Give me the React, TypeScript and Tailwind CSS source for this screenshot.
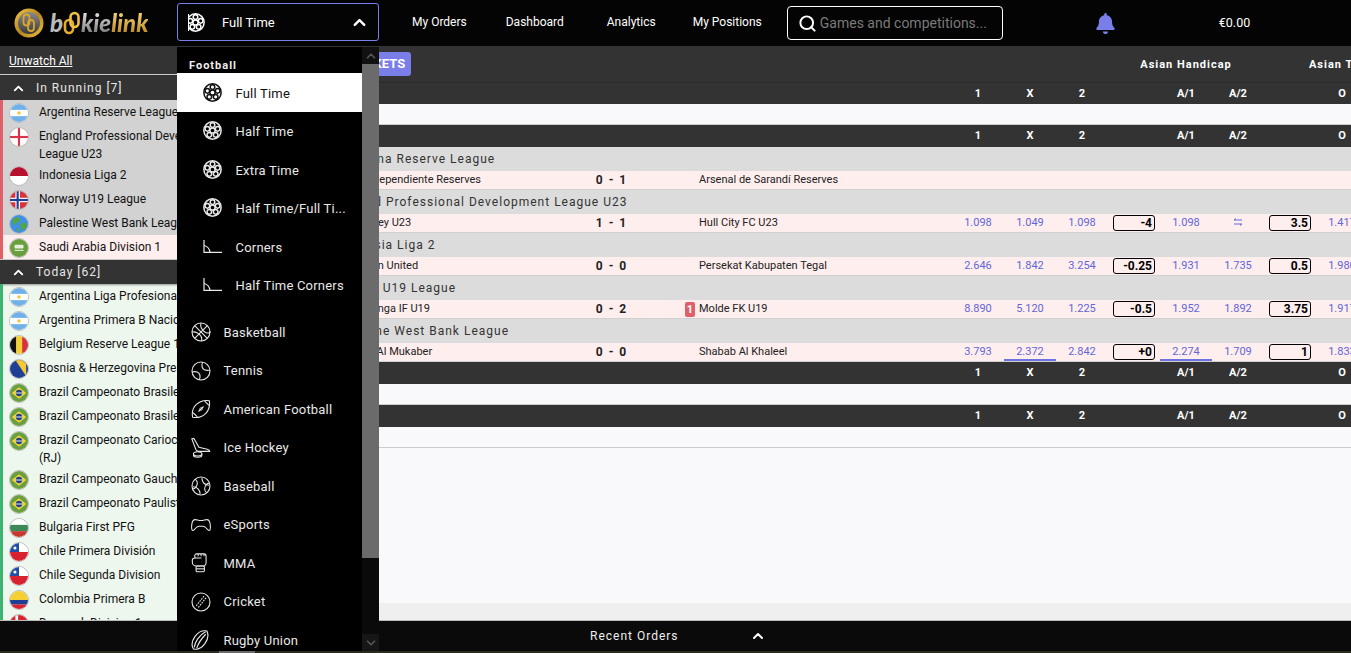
import React from "react";
import { ChevronDown, ChevronUp, Search } from "lucide-react";
import { FaBell } from "react-icons/fa";

const SoccerIcon = () => (
  <svg width="19" height="19" viewBox="0 0 24 24" fill="none" stroke="currentColor" strokeWidth="1.9">
    <circle cx="12" cy="12" r="10.9" />
    <circle cx="12" cy="12" r="3.3" />
    <circle cx="12" cy="5.2" r="2.9" />
    <circle cx="18.5" cy="9.9" r="2.9" />
    <circle cx="16" cy="17.5" r="2.9" />
    <circle cx="8" cy="17.5" r="2.9" />
    <circle cx="5.5" cy="9.9" r="2.9" />
  </svg>
);

const CornerIcon = () => (
  <svg width="19" height="13" viewBox="0 0 19 13" fill="none" stroke="currentColor" strokeWidth="1.2">
    <path d="M1 0v12.4h18" />
    <path d="M1 5.5c3 .6 5.5 3.2 6 6.9" />
  </svg>
);

const BasketballIcon = () => (
  <svg width="20" height="20" viewBox="0 0 24 24" fill="none" stroke="currentColor" strokeWidth="1.3">
    <circle cx="12" cy="12" r="10.8" />
    <path d="M4.4 4.4l15.2 15.2M19.6 4.4L4.4 19.6" />
    <path d="M12 1.2c-1.2 4 1 9 5 11s5.600 1 6 -1" />
    <path d="M1.200 12c3.800-.8 8.800 1.200 10.800 5.200 1 2 1 4.600.2 5.600" />
  </svg>
);

const TennisIcon = () => (
  <svg width="20" height="20" viewBox="0 0 24 24" fill="none" stroke="currentColor" strokeWidth="1.3">
    <circle cx="12" cy="12" r="10.8" />
    <path d="M14 1.400c-2.600 6.600 1.200 11.400 8.800 9.400" />
    <path d="M1.200 13.200c7.600-2 11.400 2.800 8.800 9.400" />
  </svg>
);

const AmericanFootballIcon = () => (
  <svg width="20" height="20" viewBox="0 0 24 24" fill="none" stroke="currentColor" strokeWidth="1.3">
    <path d="M2 22c-1.400-7 .6-12 4.500-15.500S16 1 22 2c1 6.500-.6 11.500-4.500 15.500S8.500 23 2 22z" />
    <path d="M2.600 16.500l5 5M16.500 2.600l5 5" />
    <path d="M9 15l6-6M10 11.500l2.500 2.500M11.500 10l2.500 2.500" />
  </svg>
);

const HockeyIcon = () => (
  <svg width="20" height="20" viewBox="0 0 24 24" fill="none" stroke="currentColor" strokeWidth="1.3">
    <path d="M1 1l2.500-.5 6 10.500 10 2.500c2 .5 3 1.500 3 2.500H9.500C7.500 16 6.500 15 6 14z" />
    <ellipse cx="8" cy="19" rx="5" ry="2.500" />
    <path d="M3 19v2c0 1 2 2 5 2s5-1 5-2v-2" />
  </svg>
);

const BaseballIcon = () => (
  <svg width="20" height="20" viewBox="0 0 24 24" fill="none" stroke="currentColor" strokeWidth="1.3">
    <circle cx="12" cy="12" r="10.800" />
    <path d="M5 3.800c3.500 2.800 3.500 7 0 10.500-1 1-2.500 1.700-3.800-.2" />
    <path d="M19 20.200c-3.500-2.800-3.500-7 0-10.500 1-1 2.500-1.700 3.800.2" />
    <path d="M13 2.500c.5 5.500 3 8 8.500 8.500M2.500 13c5.500.5 8 3 8.500 8.500" />
  </svg>
);

const EsportsIcon = () => (
  <svg width="20" height="14" viewBox="0 0 24 16" fill="none" stroke="currentColor" strokeWidth="1.300">
    <path d="M5 1.500c2 0 3.500 1 5 1h4c1.500 0 3-1 5-1 2.500 0 3.500 2 4 5.500.4 3 .6 7-1 7.500-1.800.5-3-2.500-5-4-1-.8-2-1-3-1h-4c-1 0-2 .2-3 1-2 1.500-3.200 4.500-5 4-1.600-.5-1.400-4.500-1-7.500C1.500 3.500 2.500 1.500 5 1.500z" />
  </svg>
);

const MmaIcon = () => (
  <svg width="16" height="20" viewBox="0 0 18 24" fill="none" stroke="currentColor" strokeWidth="1.300">
    <path d="M6 1h9c1.500 0 2.500 1 2.500 2.500V12c0 1.500-1 3-2.500 3.500H6C3 15.500 1 13.500 1 11V8.500C1 7 2 6 4 6V3c0-1 1-2 2-2z" />
    <path d="M4 6h8M8 1v3M11.500 1v3M15 1v3" />
    <rect x="5.500" y="15.500" width="10" height="7" rx="1.500" />
    <path d="M5.500 19h10" />
  </svg>
);

const CricketIcon = () => (
  <svg width="20" height="20" viewBox="0 0 24 24" fill="none" stroke="currentColor" strokeWidth="1.300">
    <circle cx="12" cy="12" r="10.800" />
    <path d="M15.500 5L6 17" strokeDasharray="2 1.200" />
    <path d="M18 7L8.500 19" strokeDasharray="2 1.200" />
  </svg>
);

const RugbyIcon = () => (
  <svg width="18" height="20" viewBox="0 0 22 24" fill="none" stroke="currentColor" strokeWidth="1.400">
    <path d="M3 23c-2.500-4-2-10 2-15.500C9 2 14.500 0 19.500 1c2 4.500 1.500 10-2.500 15.500S7.500 24 3 23z" />
    <path d="M4 21C5 14 10 6 18 2" />
    <path d="M7 22c2-6 6-12 11-17" />
  </svg>
);

const LogoMark = () => (
  <svg width="30" height="30" viewBox="0 0 30 30" className="shrink-0">
    <defs>
      <linearGradient id="coinRing" x1="0" y1="0" x2="1" y2="1">
        <stop offset="0" stopColor="#f5c84a" />
        <stop offset="0.5" stopColor="#b5851c" />
        <stop offset="1" stopColor="#f0c040" />
      </linearGradient>
      <linearGradient id="coinFace" x1="0" y1="0" x2="0" y2="1">
        <stop offset="0" stopColor="#8a8a8a" />
        <stop offset="1" stopColor="#3a3a3a" />
      </linearGradient>
    </defs>
    <circle cx="15" cy="15" r="14.500" fill="url(#coinRing)" />
    <circle cx="15" cy="15" r="11" fill="url(#coinFace)" />
    <rect x="9.500" y="6.500" width="6" height="11" rx="3" fill="none" stroke="#d9a52c" strokeWidth="1.800" />
    <rect x="14" y="12" width="6" height="11" rx="3" fill="none" stroke="#d9a52c" strokeWidth="1.800" />
  </svg>
);

const LogoLink = () => (
  <svg width="18" height="24" viewBox="0 0 18 24" className="shrink-0">
    <rect x="2" y="9" width="8" height="13" rx="4" fill="none" stroke="#e3ad2c" strokeWidth="2.600" />
    <rect x="7.500" y="2" width="8" height="14" rx="4" fill="none" stroke="#f0c040" strokeWidth="2.600" />
  </svg>
);

const Flag = ({ code }: { code: string }) => {
  const art: Record<string, React.ReactNode> = {
    ar: (
      <>
        <rect width="20" height="20" fill="#fff" />
        <rect width="20" height="6.500" fill="#6fb1e8" />
        <rect y="13.500" width="20" height="6.500" fill="#6fb1e8" />
        <circle cx="10" cy="10" r="2" fill="#f5c542" />
      </>
    ),
    en: (
      <>
        <rect width="20" height="20" fill="#fff" />
        <rect x="8.800" width="2.400" height="20" fill="#d8344a" />
        <rect y="8.800" width="20" height="2.400" fill="#d8344a" />
      </>
    ),
    id: (
      <>
        <rect width="20" height="20" fill="#fff" />
        <rect width="20" height="10" fill="#b8102f" />
      </>
    ),
    no: (
      <>
        <rect width="20" height="20" fill="#d9323f" />
        <rect x="6" width="5" height="20" fill="#fff" />
        <rect y="7.500" width="20" height="5" fill="#fff" />
        <rect x="7.300" width="2.400" height="20" fill="#1f3f94" />
        <rect y="8.800" width="20" height="2.400" fill="#1f3f94" />
      </>
    ),
    ps: (
      <>
        <rect width="20" height="20" fill="#3f8ee8" />
        <path d="M3 5l5-3 3 2-1 4-4 1-1 3-2-2zM11 10l5-2 3 3-3 5-3 1-1-4zM8 14l2 2-1 3-2-2z" fill="#53a83c" />
      </>
    ),
    sa: (
      <>
        <rect width="20" height="20" fill="#6a9f3f" />
        <rect x="5" y="6.500" width="10" height="4" rx="1" fill="#e6efdb" />
        <rect x="5" y="12" width="10" height="1.200" fill="#e6efdb" />
      </>
    ),
    be: (
      <>
        <rect width="7" height="20" fill="#111" />
        <rect x="7" width="6.500" height="20" fill="#f5d033" />
        <rect x="13.500" width="6.500" height="20" fill="#d9323f" />
      </>
    ),
    ba: (
      <>
        <rect width="20" height="20" fill="#1f3f94" />
        <path d="M6 0h12v18z" fill="#f5c935" />
      </>
    ),
    br: (
      <>
        <rect width="20" height="20" fill="#6a9f3f" />
        <path d="M10 3.500L18 10l-8 6.500L2 10z" fill="#f2d43a" />
        <circle cx="10" cy="10" r="3.500" fill="#1f3f94" />
        <rect x="6.700" y="9.500" width="6.600" height="1" fill="#fff" />
      </>
    ),
    bg: (
      <>
        <rect width="20" height="20" fill="#fff" />
        <rect y="6.500" width="20" height="7" fill="#3d8a58" />
        <rect y="13.500" width="20" height="6.500" fill="#c7382f" />
      </>
    ),
    cl: (
      <>
        <rect width="20" height="20" fill="#fff" />
        <rect y="10" width="20" height="10" fill="#d9222f" />
        <rect width="10" height="10" fill="#1f4fa8" />
        <circle cx="5.500" cy="5.500" r="1.700" fill="#fff" />
      </>
    ),
    co: (
      <>
        <rect width="20" height="10" fill="#f5d033" />
        <rect y="10" width="20" height="5" fill="#1f3f94" />
        <rect y="15" width="20" height="5" fill="#d9222f" />
      </>
    ),
    dk: (
      <>
        <rect width="20" height="20" fill="#d9222f" />
        <rect x="6" width="3" height="20" fill="#fff" />
        <rect y="8.500" width="20" height="3" fill="#fff" />
      </>
    ),
  };
  return (
    <svg width="20" height="20" viewBox="0 0 20 20" className="shrink-0 rounded-full border border-[#bdbdbd]">
      {art[code]}
    </svg>
  );
};

const inRunning = [
  { code: "ar", name: "Argentina Reserve League", live: false },
  { code: "en", name: "England Professional Development League U23", live: false },
  { code: "id", name: "Indonesia Liga 2", live: false },
  { code: "no", name: "Norway U19 League", live: false },
  { code: "ps", name: "Palestine West Bank League", live: false },
  { code: "sa", name: "Saudi Arabia Division 1", live: true },
];

const today = [
  { code: "ar", name: "Argentina Liga Profesional" },
  { code: "ar", name: "Argentina Primera B Nacional" },
  { code: "be", name: "Belgium Reserve League 1" },
  { code: "ba", name: "Bosnia & Herzegovina Premier" },
  { code: "br", name: "Brazil Campeonato Brasileiro" },
  { code: "br", name: "Brazil Campeonato Brasileiro B" },
  { code: "br", name: "Brazil Campeonato Carioca Serie A (RJ)" },
  { code: "br", name: "Brazil Campeonato Gaucho" },
  { code: "br", name: "Brazil Campeonato Paulista" },
  { code: "bg", name: "Bulgaria First PFG" },
  { code: "cl", name: "Chile Primera División" },
  { code: "cl", name: "Chile Segunda Division" },
  { code: "co", name: "Colombia Primera B" },
  { code: "dk", name: "Denmark Division 1" },
];

const footballItems = [
  { label: "Full Time", icon: <SoccerIcon />, active: true },
  { label: "Half Time", icon: <SoccerIcon /> },
  { label: "Extra Time", icon: <SoccerIcon /> },
  { label: "Half Time/Full Ti...", icon: <SoccerIcon /> },
  { label: "Corners", icon: <CornerIcon /> },
  { label: "Half Time Corners", icon: <CornerIcon /> },
];

const sports = [
  { label: "Basketball", icon: <BasketballIcon /> },
  { label: "Tennis", icon: <TennisIcon /> },
  { label: "American Football", icon: <AmericanFootballIcon /> },
  { label: "Ice Hockey", icon: <HockeyIcon /> },
  { label: "Baseball", icon: <BaseballIcon /> },
  { label: "eSports", icon: <EsportsIcon /> },
  { label: "MMA", icon: <MmaIcon /> },
  { label: "Cricket", icon: <CricketIcon /> },
  { label: "Rugby Union", icon: <RugbyIcon /> },
];

const matches = [
  {
    league: "Argentina Reserve League",
    home: "CA Independiente Reserves",
    score: "0 - 1",
    away: "Arsenal de Sarandí Reserves",
  },
  {
    league: "England Professional Development League U23",
    home: "Barnsley U23",
    score: "1 - 1",
    away: "Hull City FC U23",
    odds: ["1.098", "1.049", "1.098", "-4", "1.098", "swap", "3.5", "1.417"],
  },
  {
    league: "Indonesia Liga 2",
    home: "Cilegon United",
    score: "0 - 0",
    away: "Persekat Kabupaten Tegal",
    odds: ["2.646", "1.842", "3.254", "-0.25", "1.931", "1.735", "0.5", "1.980"],
  },
  {
    league: "Norway U19 League",
    home: "Vålerenga IF U19",
    score: "0 - 2",
    away: "Molde FK U19",
    card: "1",
    odds: ["8.890", "5.120", "1.225", "-0.5", "1.952", "1.892", "3.75", "1.917"],
  },
  {
    league: "Palestine West Bank League",
    home: "Jabal Al Mukaber",
    score: "0 - 0",
    away: "Shabab Al Khaleel",
    odds: ["3.793", "2.372", "2.842", "+0", "2.274", "1.709", "1", "1.833"],
    marked: [1, 4],
  },
];

const SectionHeader = ({ title }: { title: string }) => (
  <div className="flex h-[24px] shrink-0 items-center bg-[#333] pl-[11px] text-[12px] tracking-[1px] text-[#e8e8e8] shadow-[0_1px_2px_rgba(0,0,0,0.4)]">
    <ChevronUp size={15} strokeWidth={3} className="mr-[10px] text-white" />
    {title}
  </div>
);

const ColumnHeader = ({ first }: { first?: boolean }) => (
  <div
    className={
      first
        ? "flex h-[21px] shrink-0 items-center bg-[#333] pt-[2px] text-[11px] font-bold text-white"
        : "flex h-[22px] shrink-0 items-center bg-[#333] text-[11px] font-bold text-white"
    }
  >
    <div className="w-[712px] shrink-0" />
    <div className="w-[52px] shrink-0 text-center">1</div>
    <div className="w-[52px] shrink-0 text-center">X</div>
    <div className="w-[52px] shrink-0 text-center">2</div>
    <div className="w-[52px] shrink-0" />
    <div className="w-[52px] shrink-0 text-center">A/1</div>
    <div className="w-[52px] shrink-0 text-center">A/2</div>
    <div className="w-[52px] shrink-0" />
    <div className="w-[52px] shrink-0 text-center">O</div>
  </div>
);

const EmptyRow = () => <div className="h-[21px] shrink-0 border-b border-[#ccc] bg-[#f9f9fb]" />;

const OddsCell = ({ value, marked }: { value: string; marked: boolean }) => (
  <div
    className={
      marked
        ? "flex h-[18px] w-[52px] shrink-0 items-center justify-center border-b-2 border-[#6c70e0] text-[#6266d8]"
        : "flex h-[18px] w-[52px] shrink-0 items-center justify-center pb-[2px] text-[#6266d8]"
    }
  >
    {value === "swap" ? (
      <svg width="10" height="8" viewBox="0 0 10 8" fill="none" stroke="currentColor" strokeWidth="1">
        <path d="M9 2H1l2-1.500M1 6h8L7 7.500" />
      </svg>
    ) : (
      value
    )}
  </div>
);

const LineBox = ({ value }: { value: string }) => (
  <div className="flex w-[52px] shrink-0 justify-center pt-px">
    <div className="h-[16px] w-[42px] rounded-[3px] border-[1.5px] border-black pr-[2px] text-right text-[12px] leading-[14px] font-bold text-black">
      {value}
    </div>
  </div>
);

export default function App() {
  return (
    <div className="relative flex h-screen w-full flex-col overflow-hidden bg-white font-['Roboto',sans-serif]">
      {/* top bar */}
      <header className="flex h-[46px] shrink-0 items-center bg-[#040404] text-white">
        <div className="flex w-[177px] shrink-0 items-center pl-[14px]">
          <LogoMark />
          <div className="ml-[6px] flex items-center font-['Lato',sans-serif] text-[24px] leading-none font-black italic">
            <span className="text-[#b9b9b9]">b</span>
            <LogoLink />
            <span className="bg-gradient-to-b from-[#e8e8e8] to-[#777] bg-clip-text text-transparent">kie</span>
            <span className="bg-gradient-to-b from-[#f5d878] to-[#b8861e] bg-clip-text text-transparent">link</span>
          </div>
        </div>
        <div className="mb-[2px] flex h-[38px] w-[202px] shrink-0 items-center rounded-[3px] border border-[#7a7ee8] pl-[10px]">
          <span className="h-[17px] w-px shrink-0 bg-white" />
          <span className="flex w-[16px] shrink-0 justify-end overflow-hidden">
            <span className="shrink-0">
              <SoccerIcon />
            </span>
          </span>
          <span className="ml-[17px] pt-[2px] text-[13px]">Full Time</span>
          <ChevronUp size={19} strokeWidth={3} className="ml-auto mr-[9px]" />
        </div>
        <nav className="mb-[2px] flex shrink-0 items-center text-[12px]">
          <span className="ml-[33px]">My Orders</span>
          <span className="ml-[39px]">Dashboard</span>
          <span className="ml-[43px]">Analytics</span>
          <span className="ml-[37px]">My Positions</span>
        </nav>
        <div className="ml-[25px] flex h-[34px] w-[216px] shrink-0 items-center rounded-[4px] border border-white pl-[10px]">
          <Search size={19} strokeWidth={2.5} className="text-white" />
          <span className="ml-[3px] text-[14px] text-[#7a7a7a]">Games and competitions...</span>
        </div>
        <FaBell size={21} className="ml-[92px] text-[#7a7ee8]" />
        <span className="ml-[103px] text-[12.5px]">€0.00</span>
      </header>

      <div className="flex min-h-0 flex-1">
        {/* left column */}
        <aside className="flex w-[240px] shrink-0 flex-col overflow-hidden bg-[#eef7ee] text-[12px] text-[#111]">
          <div className="flex h-[29px] shrink-0 items-center border-b border-[#ccc] bg-[#333] pt-[2px] pl-[9px] text-white">
            <span className="underline">Unwatch All</span>
          </div>
          <div className="h-[1px] shrink-0 bg-[#333]" />
          <SectionHeader title="In Running  [7]" />
          {inRunning.map((item) => (
            <div
              key={item.name}
              className={
                item.live
                  ? "flex min-h-[24px] shrink-0 items-start border-l-[3px] border-[#e0606a] bg-[#ffeeee] pt-[3px] pl-[6px] pr-[4px]"
                  : "flex min-h-[24px] shrink-0 items-start border-l-[3px] border-[#e0606a] bg-[#d2d2d2] pt-[3px] pl-[6px] pr-[4px]"
              }
            >
              <Flag code={item.code} />
              <span className="ml-[10px] leading-[18px]">{item.name}</span>
            </div>
          ))}
          <div className="h-px shrink-0 bg-[#ccc]" />
          <SectionHeader title="Today  [62]" />
          {today.map((item) => (
            <div
              key={item.name}
              className="flex min-h-[24px] shrink-0 items-start border-l-[3px] border-[#3cb371] pt-[3px] pl-[6px] pr-[4px]"
            >
              <Flag code={item.code} />
              <span className="ml-[10px] leading-[18px]">{item.name}</span>
            </div>
          ))}
        </aside>

        {/* markets */}
        <main className="flex min-w-0 flex-1 flex-col overflow-hidden bg-[#f9f9fb]">
          <div className="flex h-[37px] shrink-0 items-center border-b border-[#2b2b2b] bg-[#333] pt-[2px] text-[11px] font-bold tracking-[1px] text-white">
            <div className="-mt-[2px] w-[868px] shrink-0 pl-[73px]">
              <span className="inline-block h-[24px] rounded-[3px] bg-[#7a7ee8] px-[6px] text-[13px] leading-[24px] tracking-normal">
                ALL MARKETS
              </span>
            </div>
            <div className="w-[156px] shrink-0 text-center">Asian Handicap</div>
            <div className="w-[156px] shrink-0 text-center whitespace-nowrap">Asian Total</div>
          </div>
          <ColumnHeader first />
          <EmptyRow />
          <ColumnHeader />
          {matches.map((m) => (
            <div key={m.league} className="shrink-0">
              <div className="flex h-[24px] items-center bg-[#dcdcdc] pl-[92px] text-[12px] tracking-[1px] text-[#333]">
                {m.league}
              </div>
              <div className="flex h-[19px] w-[1200px] items-start border-b border-[#d0d0d0] bg-[#ffeeee] text-[11px] leading-[17px] text-[#222]">
                <div className="w-[340px] shrink-0 pl-[107px]">{m.home}</div>
                <div className="w-[62px] shrink-0 text-center text-[12px] leading-[18px] font-bold whitespace-pre">
                  {m.score.replace(" - ", "  -  ")}
                </div>
                <div className="flex h-[18px] w-[57px] shrink-0 items-center justify-end pr-[4px]">
                  {m.card && (
                    <span className="h-[15px] w-[10px] rounded-[2px] bg-[#e0606a] text-center text-[11px] leading-[15px] font-bold text-white">
                      {m.card}
                    </span>
                  )}
                </div>
                <div className="w-[253px] shrink-0">{m.away}</div>
                {m.odds?.map((value, i) =>
                  i === 3 || i === 6 ? (
                    <LineBox key={i} value={value} />
                  ) : (
                    <OddsCell key={i} value={value} marked={!!m.marked?.includes(i)} />
                  ),
                )}
              </div>
            </div>
          ))}
          <ColumnHeader />
          <EmptyRow />
          <ColumnHeader />
          <EmptyRow />
          <div className="min-h-0 flex-1" />
          <div className="h-[17px] shrink-0 bg-[#efefef]" />
        </main>
      </div>

      {/* recent orders */}
      <footer className="flex h-[31px] shrink-0 items-center border-t border-[#bbb] bg-[#0a0a0a] pl-[590px] text-[12px] tracking-[1px] text-[#eee]">
        Recent Orders
        <ChevronUp size={16} strokeWidth={3} className="ml-[71px] text-white" />
      </footer>
      <div className="h-[2px] shrink-0 bg-[#2a2b20]">
        <div className="ml-[219px] h-full w-[36px] bg-[#6a6a6a]" />
      </div>

      {/* sport dropdown */}
      <div className="absolute top-[47px] left-[177px] flex h-[604px] w-[202px] overflow-hidden bg-black text-[13px] tracking-[0.2px] text-[#e8e8e8]">
        <div className="w-[185px] shrink-0">
          <div className="h-[26px] pt-[12px] pl-[12px] text-[11px] leading-[13px] font-bold tracking-[1px] text-[#eee]">
            Football
          </div>
          {footballItems.map((item) => (
            <div
              key={item.label}
              className={
                item.active
                  ? "flex h-[38.5px] items-center bg-white pl-[26px] text-[#111]"
                  : "flex h-[38.5px] items-center pl-[26px]"
              }
            >
              <span className="flex w-[32.5px] shrink-0">{item.icon}</span>
              <span className="pt-[2px]">{item.label}</span>
            </div>
          ))}
          <div className="h-[9px]" />
          {sports.map((item) => (
            <div key={item.label} className="flex h-[38.5px] items-center pl-[14px]">
              <span className="flex w-[32.5px] shrink-0">{item.icon}</span>
              <span>{item.label}</span>
            </div>
          ))}
        </div>
        <div className="flex w-[17px] shrink-0 flex-col bg-[#0a0a0a]">
          <div className="flex h-[17px] shrink-0 items-center justify-center bg-[#111]">
            <ChevronUp size={14} strokeWidth={3} className="text-[#555]" />
          </div>
          <div className="h-[494px] shrink-0 bg-[#6b6b6b]" />
          <div className="flex-1" />
          <div className="flex h-[17px] shrink-0 items-center justify-center bg-[#161616]">
            <ChevronDown size={14} strokeWidth={3} className="text-[#555]" />
          </div>
        </div>
      </div>
    </div>
  );
}
